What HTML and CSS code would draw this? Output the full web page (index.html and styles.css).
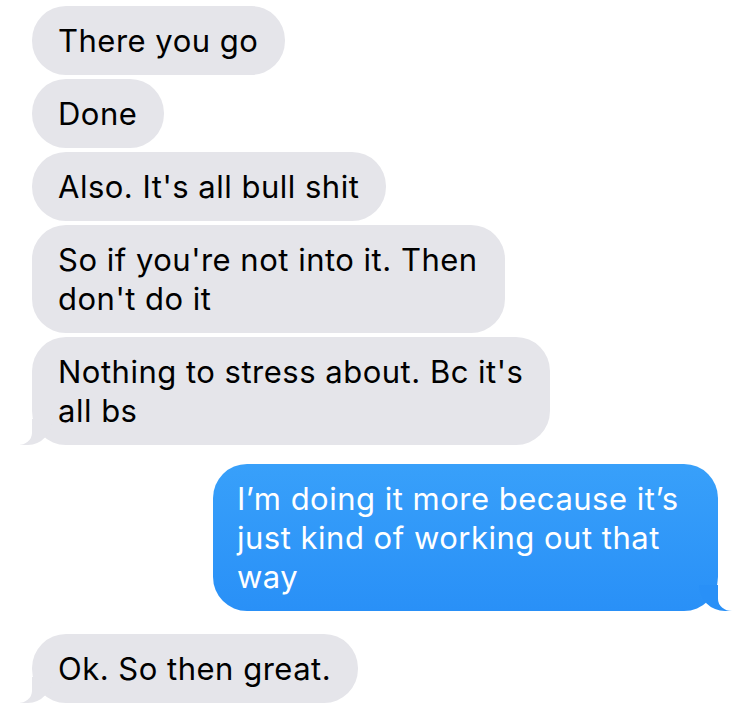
FILE: index.html
```html
<!DOCTYPE html>
<html lang="en">
<head>
    <meta charset="UTF-8">
    <meta name="viewport" content="width=device-width,initial-scale=1.0">
    <title>Messages</title>
    <link rel="stylesheet" href="styles.css">
</head>
<body>
    <div class="thread">
        <div class="msg them">There you go</div>
        <div class="msg them">Done</div>
        <div class="msg them">Also. It's all bull shit</div>
        <div class="msg them">So if you're not into it. Then<br>don't do it</div>
        <div class="msg them tail">Nothing to stress about. Bc it's<br>all bs</div>
        <div class="msg me tail">I’m doing it more because it’s<br>just kind of working out that<br>way</div>
        <div class="msg them tail">Ok. So then great.</div>
    </div>
</body>
</html>
```

FILE: styles.css
```css
*{
    margin: 0;
    padding: 0;
    box-sizing: border-box;
}
body{
    background: #fff;
    font-family: Inter, "Noto Sans", sans-serif;
}
.thread{
    display: flex;
    flex-direction: column;
    align-items: flex-start;
    gap: 4px;
    padding: 6px 32px 0 32px;
}
.msg{
    position: relative;
    font-size: 31px;
    letter-spacing: 0.5px;
    line-height: 39px;
    padding: 15px 27px 15px 26px;
    border-radius: 34px;
    white-space: nowrap;
}
.them{
    background: #e5e5ea;
    color: #000;
}
.me{
    align-self: flex-end;
    width: 505px;
    margin: 15px 0 19px 0;
    padding-left: 24px;
    background: linear-gradient(#38a0fa, #2990f7);
    color: #fff;
}
.tail::before,
.tail::after{
    content: "";
    position: absolute;
    bottom: 0;
    height: 26px;
}
.them.tail::before{
    left: -12px;
    width: 32px;
    background: #e5e5ea;
    border-bottom-right-radius: 24px 26px;
}
.them.tail::after{
    left: -22px;
    width: 22px;
    background: #fff;
    border-bottom-right-radius: 14px 12px;
}
.me.tail::before{
    right: -17px;
    width: 36px;
    background: #2990f7;
    border-bottom-left-radius: 26px 26px;
}
.me.tail::after{
    right: -26px;
    width: 26px;
    background: #fff;
    border-bottom-left-radius: 14px 12px;
}
```
